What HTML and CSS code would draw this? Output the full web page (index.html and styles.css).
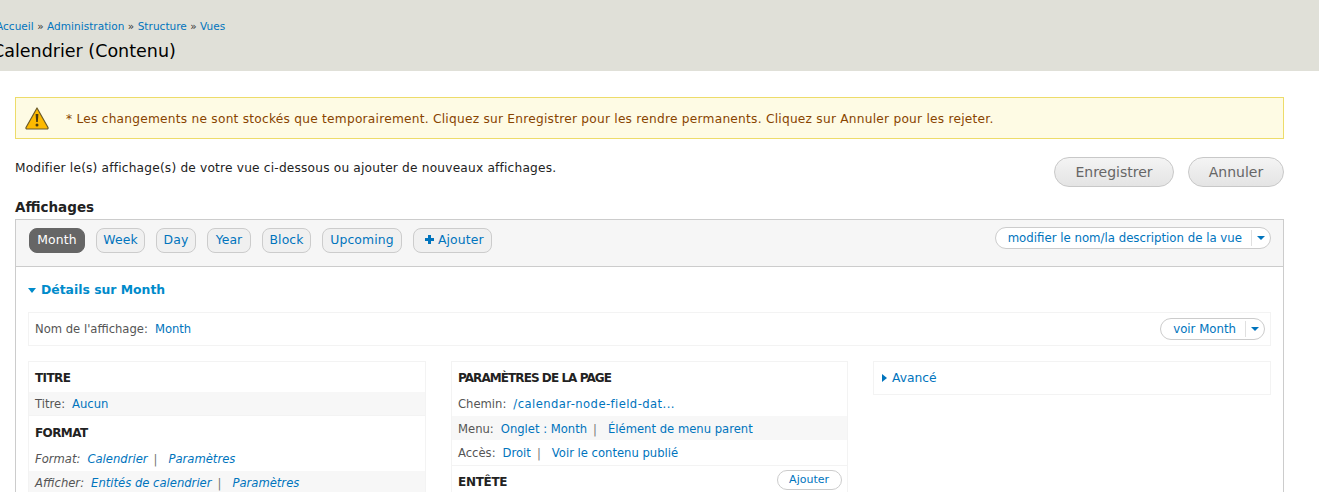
FILE: index.html
```html
<!DOCTYPE html>
<html lang="fr">
<head>
<meta charset="utf-8">
<title>Calendrier (Contenu)</title>
<link rel="stylesheet" href="styles.css">
</head>
<body>
<header class="page-head">
  <nav class="crumbs"><a href="#">Accueil</a> » <a href="#">Administration</a> » <a href="#">Structure</a> » <a href="#">Vues</a></nav>
  <h1>Calendrier (Contenu)</h1>
</header>
<main class="page">
  <div class="warning">
    <svg class="warn-icon" width="24" height="24" viewBox="0 0 24 24"><path d="M12 2 L23 21.5 Q23.3 23 22 23 L2 23 Q.7 23 1 21.5 Z" fill="#fdb900" stroke="#6b5a28" stroke-width="1.2" stroke-linejoin="round"/><path d="M10.6 8h2.8l-.6 8h-1.6z" fill="#4a3a10"/><circle cx="12" cy="19" r="1.5" fill="#4a3a10"/></svg>
    <span>* Les changements ne sont stockés que temporairement. Cliquez sur Enregistrer pour les rendre permanents. Cliquez sur Annuler pour les rejeter.</span>
  </div>
  <div class="intro">
    <p>Modifier le(s) affichage(s) de votre vue ci-dessous ou ajouter de nouveaux affichages.</p>
    <div class="actions"><button class="btn save">Enregistrer</button><button class="btn">Annuler</button></div>
  </div>
  <h2 class="section-title">Affichages</h2>
  <section class="displays">
    <div class="tabbar">
      <ul class="tabs">
        <li class="tab active">Month</li>
        <li class="tab">Week</li>
        <li class="tab">Day</li>
        <li class="tab">Year</li>
        <li class="tab">Block</li>
        <li class="tab">Upcoming</li>
        <li class="tab add"><svg width="9" height="9" viewBox="0 0 9 9"><path d="M3 0h3v3h3v3H6v3H3V6H0V3h3z" fill="#0074bd"/></svg>Ajouter</li>
      </ul>
      <div class="drop"><a href="#">modifier le nom/la description de la vue</a><span class="caret-box"><i class="caret"></i></span></div>
    </div>
    <div class="details">
      <h3 class="details-title"><i class="caret big"></i>Détails sur Month</h3>
      <div class="name-row">
        <div><span class="lbl">Nom de l'affichage:</span><a href="#">Month</a></div>
        <div class="drop small"><a href="#">voir Month</a><span class="caret-box"><i class="caret"></i></span></div>
      </div>
      <div class="columns">
        <div class="col first">
          <h4>TITRE</h4>
          <div class="row alt bordered"><span class="lbl">Titre:</span><a href="#">Aucun</a></div>
          <h4 class="h-format">FORMAT</h4>
          <div class="row em"><span class="lbl">Format:</span><a href="#">Calendrier</a><span class="sep">|</span><a href="#">Paramètres</a></div>
          <div class="row em alt"><span class="lbl">Afficher:</span><a href="#">Entités de calendrier</a><span class="sep">|</span><a href="#">Paramètres</a></div>
        </div>
        <div class="col second">
          <h4 class="long">PARAMÈTRES DE LA PAGE</h4>
          <div class="row"><span class="lbl">Chemin:</span><a class="path" href="#">/calendar-node-field-dat...</a></div>
          <div class="row alt menu"><span class="lbl">Menu:</span><a href="#">Onglet : Month</a><span class="sep">|</span><a href="#">Élément de menu parent</a></div>
          <div class="row bordered access"><span class="lbl">Accès:</span><a href="#">Droit</a><span class="sep">|</span><a href="#">Voir le contenu publié</a></div>
          <div class="entete"><h4 class="h-entete">ENTÊTE</h4><a class="pill" href="#">Ajouter</a></div>
        </div>
        <div class="col third">
          <div class="advanced"><i class="tri"></i><a href="#">Avancé</a></div>
        </div>
      </div>
    </div>
  </section>
</main>
</body>
</html>
```
FILE: styles.css
```css
* { box-sizing: border-box; }
html, body { margin: 0; height: 492px; overflow: hidden; background: #fff; }
body { font-family: "DejaVu Sans", Verdana, sans-serif; font-size: 12px; color: #333; }
a { color: #0074bd; text-decoration: none; }
.page-head { height: 71px; background: #e0e0d8; padding: 18px 0 0; margin-bottom: 26px; }
.crumbs { margin-left: -4px; font-size: 10.5px; letter-spacing: .04px; line-height: 16px; color: #333; }
h1 { margin: 5px 0 0 -8px; font-size: 17.5px; line-height: 24px; font-weight: 400; color: #000; }
.page { padding: 0 35px 0 15px; }
.warning { height: 42px; background: #fefbe4; border: 1px solid #eddc6a; color: #884400; display: flex; align-items: center; padding-left: 9px; gap: 17px; font-size: 12.2px; letter-spacing: .24px; }
.warning span { padding-top: 1px; }
.warn-icon { flex: none; }
.intro { display: flex; justify-content: space-between; margin-top: 18px; height: 30px; }
.intro p { margin: 3px 0 0; line-height: 16px; font-size: 12.2px; letter-spacing: .19px; color: #222; }
.actions { display: flex; gap: 14px; }
.btn { height: 30px; border: 1px solid #c8c8c8; border-radius: 15px; background: linear-gradient(#f4f4f4, #e4e4e4); color: #666; font: 14px "DejaVu Sans", sans-serif; padding: 0; width: 96px; }
.btn.save { width: 120px; }
.section-title { margin: 12px 0 3px; font-size: 13.5px; line-height: 17px; color: #222; font-weight: 700; }
.displays { border: 1px solid #ccc; border-bottom: 0; }
.tabbar { height: 47px; background: #f6f6f6; border-bottom: 1px solid #ccc; display: flex; justify-content: space-between; padding: 7px 12px 0 13px; }
.tabs { list-style: none; margin: 1px 0 0; padding: 0; display: flex; gap: 11px; align-items: flex-start; }
.tab { height: 25px; border: 1px solid #ccc; border-radius: 8px; background: #f0f0f0; color: #0074bd; font-size: 12.4px; letter-spacing: .1px; line-height: 22px; text-align: center; white-space: nowrap; }
.tab:nth-child(1) { width: 56px; }
.tab:nth-child(2) { width: 49px; }
.tab:nth-child(3) { width: 40px; }
.tab:nth-child(4) { width: 44px; }
.tab:nth-child(5) { width: 49px; }
.tab:nth-child(6) { width: 80px; }
.tab.active { background: #666; border-color: #666; color: #fff; }
.tab.add { width: 79px; text-align: left; padding-left: 11px; }
.tab.add svg { margin-right: 4px; }
.drop { height: 22px; border: 1px solid #ccc; border-radius: 11px; background: #fff; display: inline-flex; align-items: center; padding-left: 12px; font-size: 11.75px; }
.caret-box { border-left: 1px solid #e0e0e0; height: 16px; width: 19px; margin-left: 9px; display: flex; align-items: center; justify-content: center; }
.caret { display: block; width: 0; height: 0; border: 4px solid transparent; border-top-color: #0074bd; border-bottom: 0; }
.details { padding: 0 12px; }
.details-title { margin: 14px 0 0; height: 18px; display: flex; align-items: center; font-size: 12.4px; color: #008bcb; font-weight: 700; line-height: 18px; }
.caret.big { border-width: 5px 4.5px 0; margin-right: 5px; border-top-color: #008bcb; }
.name-row { margin-top: 13px; height: 34px; border: 1px solid #f3f3f3; display: flex; justify-content: space-between; align-items: center; padding: 0 5px 0 6px; font-size: 11.6px; }
.lbl { color: #555; margin-right: 7px; }
.columns { display: flex; margin-top: 15px; gap: 25px; }
.col { border: 1px solid #f3f3f3; font-size: 11.6px; }
.first { width: 398px; }
.second { width: 397px; }
.third { width: 398px; height: 34px; }
h4 { margin: 0; font-size: 12px; letter-spacing: -.6px; line-height: 14px; padding: 9px 6px 7px; color: #222; }
h4.h-format { padding-top: 10px; }
h4.long { letter-spacing: -.93px; }
h4.h-entete { letter-spacing: -.3px; }
.row { height: 24px; line-height: 24px; padding: 0 6px; }
.row.menu { line-height: 26px; }
.row.access { height: 26px; line-height: 26px; }
.path { letter-spacing: .42px; }
.alt { background: #f7f7f7; }
.bordered { border-bottom: 1px solid #f3f3f3; }
.em { font-style: italic; }
.sep { color: #777; margin: 0 11px 0 6px; }
.entete { display: flex; justify-content: space-between; align-items: center; padding-right: 5px; }
.pill { height: 20px; margin-top: -2px; border: 1px solid #ccc; border-radius: 10px; line-height: 18px; padding: 0 12px 0 11.5px; font-size: 11px; }
.advanced { height: 32px; display: flex; align-items: center; padding-left: 8px; font-size: 12.3px; }
.tri { width: 0; height: 0; border: 4px solid transparent; border-left: 5px solid #0074bd; border-right: 0; margin-right: 5px; }
```
